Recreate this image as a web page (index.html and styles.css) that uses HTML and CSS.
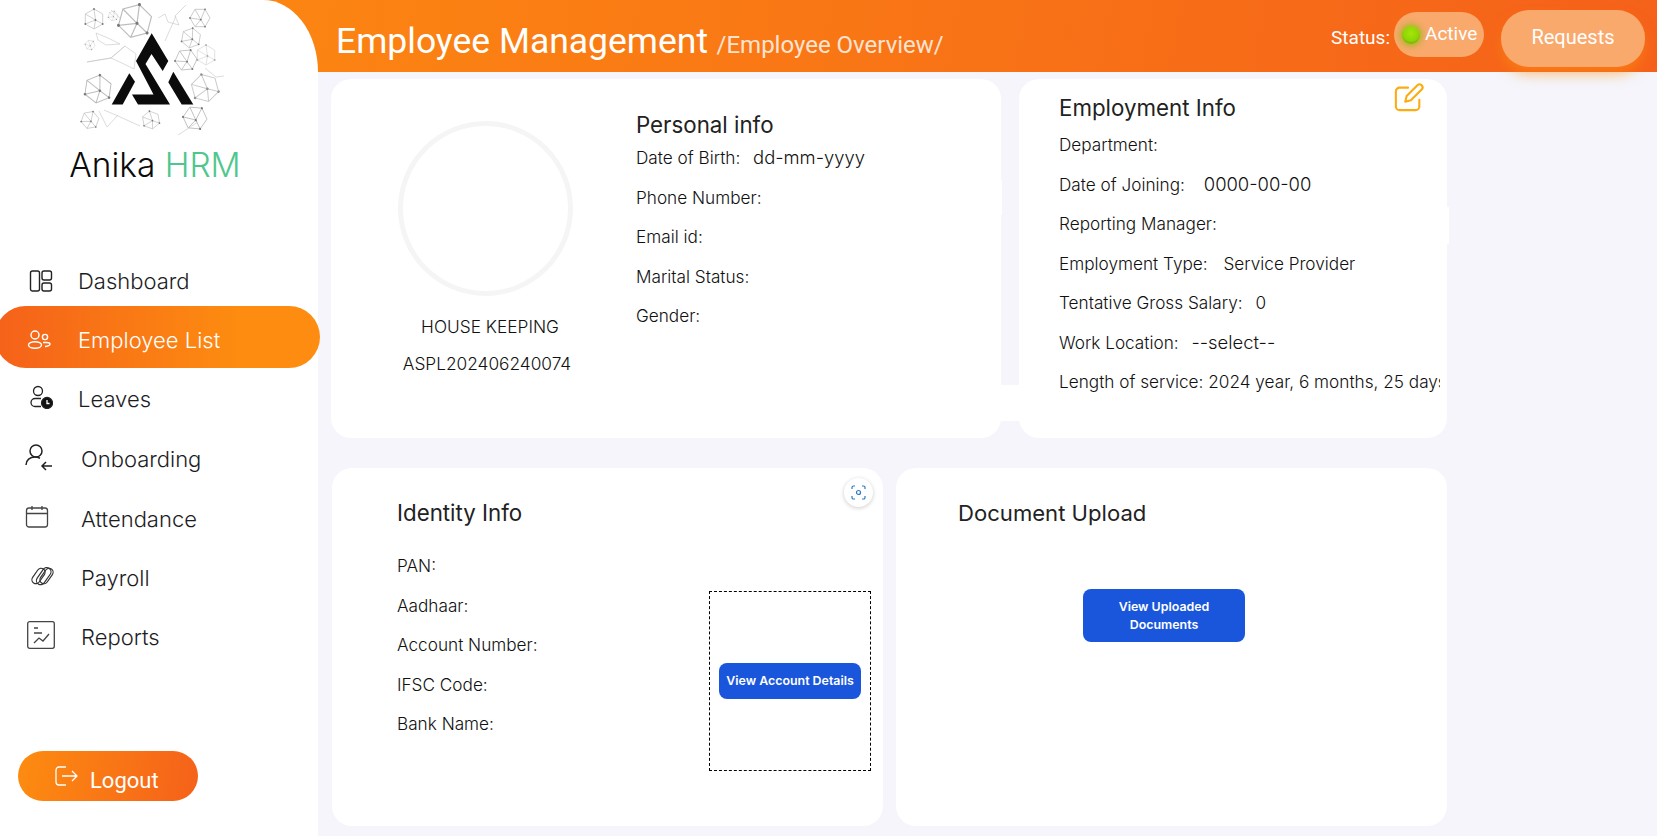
FILE: index.html
```html
<!DOCTYPE html>
<html>
<head>
    <meta charset="utf-8">
    <title>Employee Management</title>
    <link rel="stylesheet" href="styles.css">
</head>
<body>
<div class="page">
    <header class="topbar">
        <div class="title-wrap">
            <span class="title">Employee Management</span>
            <span class="subtitle">/Employee Overview/</span>
        </div>
        <div class="status-wrap">
            <span class="status-label">Status:</span>
            <span class="status-pill"><i class="dot"></i>Active</span>
            <button class="req-btn">Requests</button>
        </div>
    </header>

    <aside class="sidebar">
        <div class="logo">
            <svg class="logo-img" width="147" height="136" viewBox="80 3 147 136">
                <defs>
                    <g id="hx">
                        <path d="M0-1L.87-.5V.5L0 1-.87.5V-.5zM0-1L.15.1 .87.5M.15.1L-.87.5M.15.1L0 1M.15.1L-.87-.5" fill="none" stroke="#bdbdbd" stroke-width=".07"/>
                        <g fill="#777"><circle cx="0" cy="-1" r=".09"/><circle cx=".87" cy=".5" r=".09"/><circle cx="-.87" cy=".5" r=".09"/><circle cx=".15" cy=".1" r=".09"/></g>
                    </g>
                </defs>
                <use href="#hx" transform="translate(94 19) scale(10)"/>
                <use href="#hx" transform="translate(135 21) rotate(15) scale(17)"/>
                <use href="#hx" transform="translate(98 89) rotate(8) scale(14)"/>
                <use href="#hx" transform="translate(90 120) rotate(20) scale(9)"/>
                <use href="#hx" transform="translate(151 120) rotate(-10) scale(9)"/>
                <use href="#hx" transform="translate(186 60) rotate(25) scale(11)"/>
                <use href="#hx" transform="translate(191 38) rotate(10) scale(10)"/>
                <use href="#hx" transform="translate(200 18) rotate(30) scale(10)"/>
                <use href="#hx" transform="translate(206 55) scale(10)" opacity=".6"/>
                <use href="#hx" transform="translate(90 45) rotate(40) scale(5)"/>
                <use href="#hx" transform="translate(113 16) rotate(15) scale(5)"/>
                <use href="#hx" transform="translate(205 88) rotate(-15) scale(14)" opacity=".8"/>
                <use href="#hx" transform="translate(195 118) rotate(35) scale(12)"/>
                <path d="M96 33l12 5 12 6-14 1-8-5zM87 62l24-4 14-12 11 8-2 15-8-4-15-7-24 4zM125 46l-14 12M104 110l14 6 22 10M99 111l8 16 11-12M158 18l7-4 3 8 11 3-4-9 11-11M165 41l11-25M178 135l20-13M120 18l-9-8M205 68l11 9 8-1" fill="none" stroke="#c4c4c4" stroke-width=".6"/>
                <g fill="#0b0b0b">
                    <path d="M151.700 33.300L168.300 61 162.700 71 151.500 54 145.500 64 170 104.500H138L132 94.500H153.500L136 61z"/>
                    <path d="M129.300 73.300L135 81.700 122.700 104.500H111.700z"/>
                    <path d="M173.300 71.700L193.300 104.500H181.700L168.300 82.300z"/>
                </g>
            </svg>
            <div class="brand">Anika <span>HRM</span></div>
        </div>

        <nav class="menu">
            <a class="menu-item first" href="#">
                <span class="ico-box"><svg width="24" height="24" viewBox="0 0 24 24" fill="none" stroke="#222" stroke-width="1.4"><rect x="1.500" y="2" width="9" height="20" rx="2"/><rect x="13" y="2" width="9.500" height="9" rx="2"/><rect x="13" y="14" width="9.500" height="8" rx="2"/></svg></span>
                Dashboard
            </a>
            <a class="menu-item active" href="#">
                <span class="ico-box"><svg class="ico-people" width="24" height="24" viewBox="0 0 24 24" fill="none" stroke="#fff" stroke-width="1.4"><circle cx="8" cy="7" r="4"/><circle cx="18" cy="9" r="2.600"/><ellipse cx="8" cy="17" rx="6.500" ry="3.200"/><path d="M16 14.500h3.500c2 0 3.500.8 3.500 1.700s-2 2.300-5 2.300"/></svg></span>
                Employee List
            </a>
            <a class="menu-item" href="#">
                <span class="ico-box"><svg class="ico-leaves" width="24" height="24" viewBox="0 0 24 24" fill="none" stroke="#222" stroke-width="1.300"><circle cx="9" cy="6" r="4.500"/><path d="M12 13.500H6a4 4 0 0 0 0 8h6"/><circle cx="18" cy="18" r="5.500" fill="#111"/><path d="M18 15v3.500h2.500" stroke="#fff"/></svg></span>
                Leaves
            </a>
            <a class="menu-item wide" href="#">
                <span class="ico-box"><svg width="28" height="28" viewBox="0 0 28 28" fill="none" stroke="#222" stroke-width="1.5"><circle cx="11" cy="8" r="6"/><path d="M1 22c0-5 4-8 9-8 2 0 3 .3 5 1.200"/><path d="M27 23h-10M21 19l-4 4 4 4"/></svg></span>
                Onboarding
            </a>
            <a class="menu-item wide" href="#">
                <span class="ico-box"><svg width="24" height="24" viewBox="0 0 24 24" fill="none" stroke="#444" stroke-width="1.300"><rect x="1.500" y="3" width="21" height="19" rx="2.500"/><path d="M1.500 8.500h21M7 1v4M17 1v4"/></svg></span>
                Attendance
            </a>
            <a class="menu-item wide" href="#">
                <span class="ico-box"><svg class="ico-payroll" width="26" height="24" viewBox="0 0 26 24" fill="none" stroke="#333" stroke-width="1.200"><rect x="1" y="8" width="17" height="8" rx="4" transform="rotate(-55 9.500 12)"/><rect x="5" y="8" width="19" height="8.500" rx="4.200" transform="rotate(-55 14.500 12)"/><rect x="9" y="8" width="17" height="8" rx="4" transform="rotate(-55 17.500 12)"/></svg></span>
                Payroll
            </a>
            <a class="menu-item wide" href="#">
                <span class="ico-box"><svg class="ico-reports" width="28" height="28" viewBox="0 0 28 28" fill="none" stroke="#444" stroke-width="1.300"><rect x=".7" y=".7" width="26.600" height="26.600" rx="2"/><path d="M7 7h4M7 12h8M7 22l5-5 4 3 6-7"/></svg></span>
                Reports
            </a>
        </nav>

        <button class="logout">
            <svg width="24" height="22" viewBox="0 0 24 22" fill="none" stroke="#fff" stroke-width="1.300"><path d="M12 2H5a3 3 0 0 0-3 3v12a3 3 0 0 0 3 3h7"/><path d="M8 11h15M18 6l5 5-5 5"/></svg>
            <span>Logout</span>
        </button>
    </aside>

    <main class="content">
        <div class="row row-top">
            <section class="card card-personal">
                <div class="profile">
                    <div class="avatar"></div>
                    <div class="designation">HOUSE KEEPING</div>
                    <div class="emp-code">ASPL202406240074</div>
                </div>
                <div class="info">
                    <h3>Personal info</h3>
                    <p>Date of Birth: <b class="val-date">dd-mm-yyyy</b></p>
                    <p>Phone Number:</p>
                    <p>Email id:</p>
                    <p>Marital Status:</p>
                    <p>Gender:</p>
                </div>
            </section>
            <i class="bridge"></i>
            <section class="card card-employment">
                <svg class="edit-ico" width="30" height="30" viewBox="0 0 32 32" fill="none" stroke="#fcab10" stroke-width="2.200" stroke-linecap="round" stroke-linejoin="round"><path d="M15 6H6a4 4 0 0 0-4 4v16a4 4 0 0 0 4 4h17a4 4 0 0 0 4-4v-7"/><path d="M12 21l1.500-6L25 3.500a3 3 0 0 1 4.500 4.500L18 19.500z"/></svg>
                <div class="info">
                    <h3>Employment Info</h3>
                    <p>Department:</p>
                    <p>Date of Joining: <b class="val-date val-join">0000-00-00</b></p>
                    <p>Reporting Manager:</p>
                    <p>Employment Type: <b class="val-type">Service Provider</b></p>
                    <p>Tentative Gross Salary: <b>0</b></p>
                    <p>Work Location: <b class="val-date">--select--</b></p>
                    <p>Length of service: 2024 year, 6 months, 25 days</p>
                </div>
            </section>
        </div>
        <div class="row row-bottom">
            <section class="card card-identity">
                <span class="scan-btn">
                    <svg width="15" height="15" viewBox="0 0 15 15" fill="none" stroke="#2b78c5" stroke-width="1.200"><path d="M1 4V2.500A1.500 1.500 0 0 1 2.500 1H4M11 1h1.500A1.500 1.500 0 0 1 14 2.500V4M14 11v1.500a1.500 1.500 0 0 1-1.500 1.500H11M4 14H2.500A1.500 1.500 0 0 1 1 12.500V11"/><circle cx="7.500" cy="7.500" r="2"/></svg>
                </span>
                <div class="info">
                    <h3>Identity Info</h3>
                    <p>PAN:</p>
                    <p>Aadhaar:</p>
                    <p>Account Number:</p>
                    <p>IFSC Code:</p>
                    <p>Bank Name:</p>
                </div>
                <div class="dash-box">
                    <button class="blue-btn account-btn">View Account Details</button>
                </div>
            </section>
            <section class="card card-docs">
                <h3>Document Upload</h3>
                <div class="docs-action">
                    <button class="blue-btn docs-btn">View Uploaded Documents</button>
                </div>
            </section>
        </div>
    </main>
</div>
</body>
</html>
```

FILE: styles.css
```css
* {
    box-sizing: border-box;
}

html, body {
    margin: 0;
    height: 100%;
    overflow: hidden;
}

body {
    background-color: #f5f5fb;
    font-family: Inter, "Liberation Sans", sans-serif;
    color: #111;
}

.page {
    display: grid;
    grid-template-columns: 318px 1fr;
    grid-template-rows: 72px 1fr;
    height: 836px;
    background: #f5f5fb;
}

/* header runs under the sidebar corner */
.topbar {
    grid-column: 1 / 3;
    grid-row: 1;
    display: flex;
    justify-content: space-between;
    align-items: flex-start;
    padding-left: 336px;
    padding-right: 12px;
    background: linear-gradient(100deg, #fd8c10 0%, #f5611a 100%);
    color: white;
}

.title-wrap {
    margin-top: 19px;
    white-space: nowrap;
}

.title {
    font-family: Roboto, sans-serif;
    font-size: 35.500px;
    line-height: 44px;
}

.subtitle {
    font-family: Roboto, sans-serif;
    font-size: 24px;
    margin-left: 4px;
    opacity: 0.8;
}

.status-wrap {
    display: flex;
    align-items: flex-start;
}

.status-label {
    font-family: Roboto, sans-serif;
    font-size: 19px;
    margin-top: 26px;
    margin-right: 4px;
}

.status-pill {
    display: flex;
    align-items: center;
    width: 90px;
    height: 45px;
    margin-top: 12px;
    padding-left: 8px;
    padding-bottom: 2px;
    border-radius: 23px;
    background: #f9a96c;
    font-family: Roboto, sans-serif;
    font-size: 19px;
}

.dot {
    width: 18px;
    height: 18px;
    margin-right: 5px;
    margin-top: 2px;
    border-radius: 50%;
    background: radial-gradient(circle at 50% 40%, #a4e60a 0%, #8fd404 55%, #4f8c00 100%);
    box-shadow: 0 0 6px 2px rgba(130, 190, 0, .7);
}

.req-btn {
    width: 144px;
    height: 57px;
    margin-top: 10px;
    margin-left: 17px;
    padding-bottom: 4px;
    border: 0;
    border-radius: 28px;
    background: #f9a96c;
    box-shadow: 0 8px 14px -2px rgba(253, 140, 16, .6);
    color: white;
    font-family: Roboto, sans-serif;
    font-size: 20px;
}

.sidebar {
    grid-column: 1;
    grid-row: 1 / 3;
    position: relative;
    z-index: 2;
    display: flex;
    flex-direction: column;
    background: white;
    border-top-right-radius: 55px 72px;
}

.logo {
    text-align: center;
    padding-top: 3px;
    height: 246.500px;
}

.logo-img {
    display: block;
    margin-left: 80px;
}

.brand {
    margin-top: 6px;
    font-size: 33.400px;
    line-height: 40px;
    margin-right: 8px;
    color: #0b0b0b;
    font-weight: 300;
}

.brand span {
    color: #4ec78e;
}

.menu {
    display: flex;
    flex-direction: column;
}

.menu-item {
    display: flex;
    align-items: center;
    height: 59.300px;
    padding-top: 4px;
    padding-left: 29px;
    color: #1d1d1f;
    text-decoration: none;
    font-size: 22px;
    font-weight: 300;
}

.ico-box {
    display: flex;
    flex: none;
    width: 49px;
}

.menu-item.first {
    padding-top: 9px;
}

.menu-item.wide {
    padding-left: 25px;
    padding-top: 5px;
}

.menu-item.wide .ico-box {
    width: 56px;
    margin-top: -4px;
}

.menu-item.active {
    width: 325px;
    height: 62px;
    margin-left: -5px;
    padding-left: 34px;
    padding-top: 6px;
    border-radius: 31px;
    background: linear-gradient(90deg, #f5611a 0%, #fd8c10 75%);
    color: white;
}

.ico-people {
    margin-left: -2px;
}

.ico-leaves {
    margin-top: -4px;
}

.ico-payroll {
    margin-left: 4px;
}

.ico-reports {
    margin-left: 2px;
}

.logout {
    display: flex;
    align-items: center;
    gap: 12px;
    width: 180px;
    height: 50px;
    margin-top: auto;
    margin-bottom: 35px;
    margin-left: 18px;
    padding-left: 36px;
    border: 0;
    border-radius: 25px;
    background: linear-gradient(100deg, #fd8c10 0%, #f5611a 100%);
    color: white;
    font-family: Roboto, sans-serif;
    font-size: 22px;
}

.logout span {
    margin-top: 8px;
}

.content {
    grid-column: 2;
    grid-row: 2;
    width: 1129px;
    padding: 7px 0 0 13px;
}

.row {
    display: flex;
}

.row-top {
    height: 359px;
    position: relative;
}

.row-bottom {
    height: 358px;
    margin-top: 30px;
    margin-left: 1px;
    gap: 13px;
}

.card {
    position: relative;
    background: white;
    border-radius: 20px;
}

.info h3 {
    margin: 0;
    font-size: 22.300px;
    font-weight: 400;
    color: #222;
}

.info p {
    margin: 0;
    font-size: 17.200px;
    font-weight: 300;
    line-height: 39.600px;
    white-space: nowrap;
}

.info b {
    font-weight: 300;
    margin-left: 8px;
}

.info .val-date {
    font-size: 18.400px;
}

.info .val-join {
    margin-left: 14px;
}

.info .val-type {
    margin-left: 11px;
}

.card-personal {
    display: flex;
    width: 670px;
}

/* small step on the card edge */
.card-personal::after {
    content: "";
    position: absolute;
    top: 101px;
    right: -1px;
    width: 1px;
    height: 35px;
    background: white;
}

.bridge {
    width: 18px;
    height: 36px;
    margin-top: 306px;
    background: white;
}

.profile {
    width: 305px;
    padding-top: 42px;
    text-align: center;
}

.avatar {
    width: 175px;
    height: 175px;
    margin-left: 67px;
    border: 5px solid #f5f5f5;
    border-radius: 50%;
}

.designation {
    margin-top: 19px;
    margin-left: 13px;
    font-size: 17.300px;
    font-weight: 300;
    line-height: 24px;
}

.emp-code {
    margin-top: 13px;
    margin-left: 7px;
    font-size: 17.300px;
    font-weight: 300;
    line-height: 24px;
}

.card-personal .info {
    padding-top: 32px;
}

.card-employment {
    width: 428px;
    padding-left: 40px;
    padding-right: 7px;
}

.card-employment::after {
    content: "";
    position: absolute;
    top: 128px;
    right: -2px;
    width: 2px;
    height: 37px;
    background: white;
}

.card-employment .info {
    overflow: hidden;
    padding-top: 15px;
}

.card-employment .info h3 {
    margin-bottom: 4px;
}

.card-employment .info p {
    line-height: 39.500px;
}

.edit-ico {
    position: absolute;
    top: 3px;
    left: 375px;
}

.card-identity {
    display: flex;
    width: 551px;
    padding-left: 65px;
}

.card-identity .info {
    width: 312px;
    padding-top: 31px;
}

.card-identity .info h3 {
    margin-bottom: 20px;
}

.scan-btn {
    position: absolute;
    top: 10px;
    right: 10px;
    display: flex;
    align-items: center;
    justify-content: center;
    width: 29px;
    height: 29px;
    border-radius: 50%;
    background: white;
    box-shadow: 0 1px 4px rgba(0, 0, 0, .2);
}

.dash-box {
    display: flex;
    align-items: center;
    justify-content: center;
    width: 162px;
    height: 180px;
    margin-top: 123px;
    border: 1px dashed black;
}

.blue-btn {
    border: 0;
    border-radius: 8px;
    background: #1a56db;
    color: white;
    font-family: Inter, sans-serif;
    font-size: 12.400px;
    font-weight: 600;
    line-height: 18px;
}

.account-btn {
    width: 142px;
    height: 36px;
    padding: 0;
    white-space: nowrap;
}

.card-docs {
    width: 551px;
    padding-top: 32px;
}

.card-docs h3 {
    margin: 0 0 0 62px;
    font-size: 22.100px;
    font-weight: 400;
    color: #222;
}

.docs-action {
    display: flex;
    justify-content: center;
    margin-top: 63px;
    margin-left: -15px;
}

.docs-btn {
    width: 162px;
    height: 53px;
    padding: 0 20px;
}
```
